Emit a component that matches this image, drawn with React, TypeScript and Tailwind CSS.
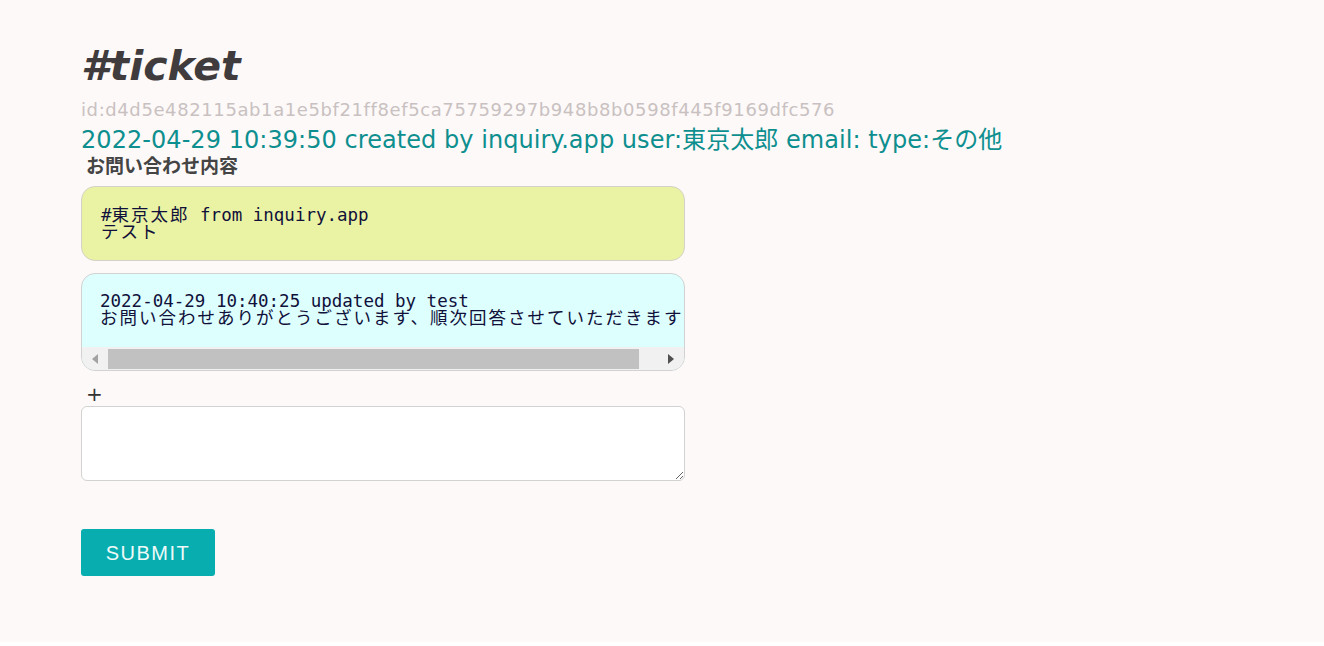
const mono = { fontFamily: '"DejaVu Sans Mono", "Noto Sans CJK JP", monospace' };

function ScrollBar() {
  return (
    <div className="flex h-[23px] items-center bg-[#f1f1f1]">
      <div className="flex w-[26px] justify-center">
        <svg width="6" height="10" viewBox="0 0 6 10">
          <path d="M6 0 L0 5 L6 10 Z" fill="#a3a3a3" />
        </svg>
      </div>
      <div className="h-[20px] w-[531px] bg-[#c1c1c1]" />
      <div className="flex flex-1 justify-end pr-[10px]">
        <svg width="6" height="10" viewBox="0 0 6 10">
          <path d="M0 0 L6 5 L0 10 Z" fill="#505050" />
        </svg>
      </div>
    </div>
  );
}

export default function App() {
  return (
    <div className="bg-white">
      <div
        className="h-[642px] bg-[#fdf9f8] pl-[81px] pt-[42px]"
        style={{ fontFamily: '"DejaVu Sans", "Noto Sans CJK JP", sans-serif' }}
      >
        <h1 className="text-[41px] leading-[48px] font-bold italic text-[#403c3e]">#ticket</h1>
        <div className="mt-[9px] text-[18px] leading-[22px] tracking-[0.6px] text-[#c9c1c1]">
          id:d4d5e482115ab1a1e5bf21ff8ef5ca75759297b948b8b0598f445f9169dfc576
        </div>
        <div className="mt-[5px] text-[24px] leading-[28px] tracking-[0.05px] text-[#0e8f8f]">
          2022-04-29 10:39:50 created by inquiry.app user:東京太郎 email: type:その他
        </div>
        <div className="w-[604px]">
          <h2 className="pl-[5px] text-[19px] leading-[24px] font-bold text-[#444]">お問い合わせ内容</h2>

          <div
            className="mt-[8px] rounded-[14px] border border-[#d2d2c8] bg-[#eaf3a3] px-[19px] pb-[19px] pt-[20px] text-[17.5px] leading-[17px] text-[#10103a]"
            style={mono}
          >
            <div>
              #<span className="tracking-[2px]">東京太郎</span> from inquiry.app
            </div>
            <div className="tracking-[2px]">テスト</div>
          </div>

          <div className="mt-[12px] overflow-hidden rounded-[14px] border border-[#d2d2d2] bg-[#ddfffe]">
            <div
              className="h-[73px] overflow-hidden whitespace-pre px-[18px] pt-[19px] text-[17.5px] leading-[17px] text-[#10103a]"
              style={mono}
            >
              <div>2022-04-29 10:40:25 updated by test</div>
              <div className="tracking-[2px]">お問い合わせありがとうございます、順次回答させていただきます</div>
            </div>
            <ScrollBar />
          </div>

          <div className="mt-[11px] pl-[5px] text-[20px] leading-[24px] text-[#333]">+</div>
          <textarea className="block h-[75px] w-full rounded-[6px] border border-[#d2d2d2] bg-white" />

          <button
            className="mt-[48px] h-[47px] w-[134px] rounded-[3px] bg-[#08adb0] text-[20px] tracking-[1.5px] text-[#eefaf8]"
            style={{ fontFamily: '"Liberation Sans", Arial, sans-serif' }}
          >
            SUBMIT
          </button>
        </div>
      </div>
    </div>
  );
}
